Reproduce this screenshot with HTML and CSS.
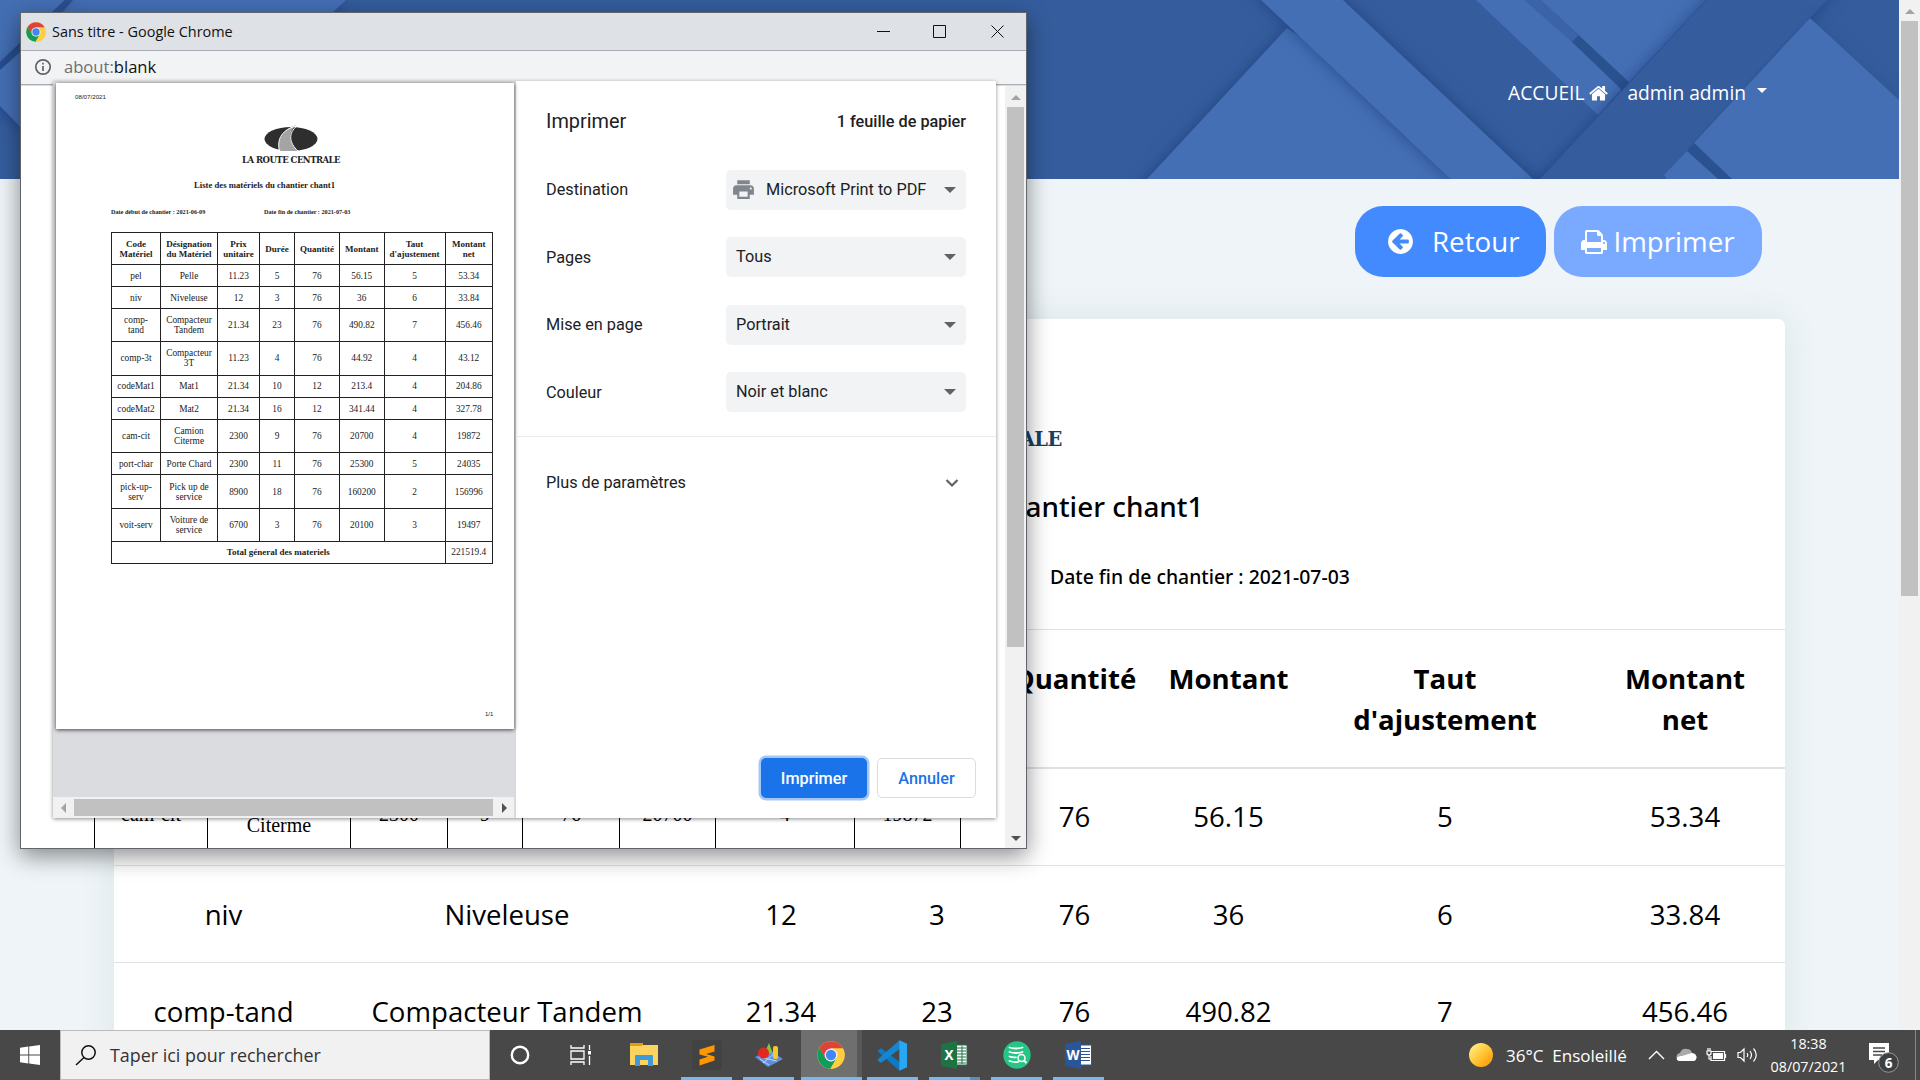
FILE: index.html
```html
<!DOCTYPE html>
<html lang="fr">
<head>
<meta charset="utf-8">
<title>Liste des matériels</title>
<link rel="stylesheet" href="styles.css">
</head>
<body>
<div class="desktop">
  <div class="browser">
    <div class="page">
      <header class="hero">
        <svg class="hero-art" width="1899" height="179" viewBox="0 0 1899 179">
          <rect width="1899" height="179" fill="#355d9d"/>
          <g fill="#446fb4">
            <path class="sh" d="M73 0H346L330 15H60z"/>
            <path class="sh" d="M-9 -9H74L0 62V110L-9 100z"/>
            <path class="sh" d="M0 70L28 45V135L0 106z"/>
            <path class="sh" d="M1287 28L1147 179L1100 240H1520V179z"/>
            <path class="sh" d="M1252 -9L1333 -9L1343 0L1533 179L1560 205H1478L1261 0z"/>
            <path d="M1476 0H1530L1622 88L1598 115z"/>
            <path fill="#3a64a7" d="M1524 0H1541L1585 42L1572 42z"/>
            <path fill="#2a5190" d="M1579 35L1629 82L1622 90L1572 42z"/>
            <path d="M1541 0H1706L1629 82z"/>
          </g>
          <path class="sh" fill="#355d9d" d="M1716 -10H1837L1810 18L1667 179L1650 200H1520L1540 179z"/>
          <g fill="#446fb4">
            <path class="sh soft" d="M1810 18L1899 100L1930 130V220H1770L1694 143z"/>
            <path fill="#355d9d" d="M1808 16L1664 173L1655 160L1790 10z"/>
            <path fill="#2a5190" d="M1694 143L1687 151L1718 179H1732z"/>
            <path d="M1687 151L1664 175L1667 179H1718z"/>
          </g>
        </svg>
        <nav class="nav">
          <span class="nav-home">ACCUEIL
            <svg width="19" height="19" viewBox="64 0 1664 1664"><path fill="#fff" d="M1472 992v480q0 26-19 45t-45 19h-384v-384h-256v384h-384q-26 0-45-19t-19-45v-480q0-1 .5-3t.5-3l575-474 575 474q1 2 1 6zm223-69l-62 74q-8 9-21 11h-3q-13 0-21-7l-692-577-692 577q-12 8-24 7-13-2-21-11l-62-74q-8-10-7-23.500t11-21.500l719-599q32-26 76-26t76 26l244 204v-195q0-14 9-23t23-9h192q14 0 23 9t9 23v408l219 182q10 8 11 21.500t-7 23.500z"/></svg>
          </span>
          <span class="nav-user">admin admin <i class="caret"></i></span>
        </nav>
      </header>
      <div class="actions">
        <div class="btn btn-back">
          <svg width="29" height="29" viewBox="0 0 1792 1792"><path fill="#fff" d="M1408 960v-128q0-26-19-45t-45-19h-502l189-189q19-19 19-45t-19-45l-91-91q-18-18-45-18t-45 18l-362 362-91 91q-18 18-18 45t18 45l91 91 362 362q18 18 45 18t45-18l91-91q18-18 18-45t-18-45l-189-189h502q26 0 45-19t19-45zm256-64q0 209-103 385.500t-279.500 279.500-385.500 103-385.500-103-279.500-279.500-103-385.500 103-385.500 279.500-279.500 385.500-103 385.500 103 279.500 279.500 103 385.500z"/></svg>
          <span>Retour</span>
        </div>
        <div class="btn btn-print">
          <svg width="28" height="28" viewBox="0 0 1792 1792"><path fill="#fff" d="M448 1536h896v-256h-896v256zm0-640h896v-384h-160q-40 0-68-28t-28-68v-160h-640v640zm1152 64q0-26-19-45t-45-19-45 19-19 45 19 45 45 19 45-19 19-45zm128 0v416q0 13-9.500 22.500t-22.500 9.500h-224v160q0 40-28 68t-68 28h-960q-40 0-68-28t-28-68v-160h-224q-13 0-22.500-9.500t-9.500-22.500v-416q0-79 56.500-135.500t135.500-56.500h64v-544q0-40 28-68t68-28h672q40 0 88 20t76 48l152 152q28 28 48 76t20 88v256h64q79 0 135.500 56.500t56.500 135.500z"/></svg>
          <span>Imprimer</span>
        </div>
      </div>
      <section class="card">
        <div class="brand">LA ROUTE CENTRALE</div>
        <h2 class="title">Liste des matériels du chantier chant1</h2>
        <div class="dates"><span>Date début de chantier : 2021-06-09</span><span>Date fin de chantier : 2021-07-03</span></div>
        <table class="materials">
          <colgroup><col style="width:219px"><col style="width:348px"><col style="width:200px"><col style="width:112px"><col style="width:163px"><col style="width:145px"><col style="width:288px"><col></colgroup>
          <thead><tr><th>Code Matériel</th><th>Désignation du Matériel</th><th>Prix unitaire</th><th>Durée</th><th>Quantité</th><th>Montant</th><th>Taut<br>d'ajustement</th><th>Montant<br>net</th></tr></thead>
          <tbody>
            <tr class="first"><td>pel</td><td>Pelle</td><td>11.23</td><td>5</td><td>76</td><td>56.15</td><td>5</td><td>53.34</td></tr>
            <tr><td>niv</td><td>Niveleuse</td><td>12</td><td>3</td><td>76</td><td>36</td><td>6</td><td>33.84</td></tr>
            <tr><td>comp-tand</td><td>Compacteur Tandem</td><td>21.34</td><td>23</td><td>76</td><td>490.82</td><td>7</td><td>456.46</td></tr>
          </tbody>
        </table>
      </section>
    </div>
    <div class="scroll scroll-main"><i class="up"></i><b></b></div>
  </div>

  <div class="window">
    <div class="titlebar">
      <svg width="20" height="20" viewBox="0 0 48 48"><use href="#chrome"/></svg>
      <span>Sans titre - Google Chrome</span>
      <svg class="controls" width="140" height="20" viewBox="0 0 140 20" fill="none" stroke="#111" stroke-width="1"><path d="M5 9.500H18M61.500 3.500h12v12h-12zM119.500 3.500l12 12M131.500 3.500l-12 12"/></svg>
    </div>
    <div class="address">
      <svg width="18" height="18" viewBox="0 0 18 18" fill="none" stroke="#5f6368" stroke-width="1.700"><circle cx="9" cy="9" r="7.200"/><path d="M9 8v5M9 4.800v1.700"/></svg>
      <span>about:<b>blank</b></span>
    </div>
    <div class="viewport">
      <div class="popup-doc">
        <table class="doc-table"><colgroup><col style="width:113px"><col style="width:143px"><col style="width:97px"><col style="width:75px"><col style="width:97px"><col style="width:96px"><col style="width:139px"><col style="width:106px"></colgroup>
          <tr><td>cam-cit</td><td>Camion<br>Citerme</td><td>2300</td><td>9</td><td>76</td><td>20700</td><td>4</td><td>19872</td></tr>
        </table>
      </div>
      <div class="scroll scroll-pop"><i class="up"></i><b></b><i class="down"></i></div>
    </div>

    <div class="dialog">
      <div class="preview">
        <div class="sheet">
          <div class="sheet-date">08/07/2021</div>
          <div class="sheet-logo">
            <svg width="54" height="27" viewBox="0 0 54 27"><ellipse cx="27" cy="14" rx="26.500" ry="12" fill="#2e2e2e"/><path d="M15 25C13 13 20 4 32 0C24 7 24 18 34 26H17z" fill="#a4a4a4"/><path d="M15.500 26C12 13 20 4 31 1.500M34 26C25 18 24 8 33 1" fill="none" stroke="#fff" stroke-width="1"/></svg>
            <span>LA ROUTE CENTRALE</span>
          </div>
          <div class="sheet-title">Liste des matériels du chantier chant1</div>
          <div class="sheet-dates"><span>Date début de chantier : 2021-06-09</span><span>Date fin de chantier : 2021-07-03</span></div>
          <table class="sheet-table">
            <colgroup><col style="width:49px"><col style="width:57px"><col style="width:42px"><col style="width:35px"><col style="width:45px"><col style="width:44.500px"><col style="width:61px"><col style="width:47.500px"></colgroup>
            <tr class="h32"><th>Code<br>Matériel</th><th>Désignation<br>du Matériel</th><th>Prix<br>unitaire</th><th>Durée</th><th>Quantité</th><th>Montant</th><th>Taut<br>d'ajustement</th><th>Montant<br>net</th></tr>
            <tr><td>pel</td><td>Pelle</td><td>11.23</td><td>5</td><td>76</td><td>56.15</td><td>5</td><td>53.34</td></tr>
            <tr><td>niv</td><td>Niveleuse</td><td>12</td><td>3</td><td>76</td><td>36</td><td>6</td><td>33.84</td></tr>
            <tr class="h33"><td>comp-<br>tand</td><td>Compacteur<br>Tandem</td><td>21.34</td><td>23</td><td>76</td><td>490.82</td><td>7</td><td>456.46</td></tr>
            <tr class="h33"><td>comp-3t</td><td>Compacteur<br>3T</td><td>11.23</td><td>4</td><td>76</td><td>44.92</td><td>4</td><td>43.12</td></tr>
            <tr class="h23"><td>codeMat1</td><td>Mat1</td><td>21.34</td><td>10</td><td>12</td><td>213.4</td><td>4</td><td>204.86</td></tr>
            <tr><td>codeMat2</td><td>Mat2</td><td>21.34</td><td>16</td><td>12</td><td>341.44</td><td>4</td><td>327.78</td></tr>
            <tr class="h33"><td>cam-cit</td><td>Camion<br>Citerme</td><td>2300</td><td>9</td><td>76</td><td>20700</td><td>4</td><td>19872</td></tr>
            <tr><td>port-char</td><td>Porte Chard</td><td>2300</td><td>11</td><td>76</td><td>25300</td><td>5</td><td>24035</td></tr>
            <tr class="h33"><td>pick-up-<br>serv</td><td>Pick up de<br>service</td><td>8900</td><td>18</td><td>76</td><td>160200</td><td>2</td><td>156996</td></tr>
            <tr class="h33"><td>voit-serv</td><td>Voiture de<br>service</td><td>6700</td><td>3</td><td>76</td><td>20100</td><td>3</td><td>19497</td></tr>
            <tr><th colspan="7">Total géneral des materiels</th><td>221519.4</td></tr>
          </table>
          <div class="sheet-page">1/1</div>
        </div>
        <div class="hscroll"><i class="left"></i><b></b><i class="right"></i></div>
      </div>
      <div class="settings">
        <div class="set-head"><span>Imprimer</span><strong>1 feuille de papier</strong></div>
        <div class="set-row"><label>Destination</label><div class="select"><svg class="printer" width="25" height="25" viewBox="0 0 24 24"><path fill="#80868b" d="M19 8H5c-1.660 0-3 1.340-3 3v6h4v4h12v-4h4v-6c0-1.660-1.340-3-3-3zm-3 11H8v-5h8v5zm3-7c-.55 0-1-.45-1-1s.45-1 1-1 1 .45 1 1-.45 1-1 1zm-1-9H6v4h12V3z"/></svg><span>Microsoft Print to PDF</span><i></i></div></div>
        <div class="set-row"><label>Pages</label><div class="select"><span>Tous</span><i></i></div></div>
        <div class="set-row"><label>Mise en page</label><div class="select"><span>Portrait</span><i></i></div></div>
        <div class="set-row"><label>Couleur</label><div class="select"><span>Noir et blanc</span><i></i></div></div>
        <div class="more"><span>Plus de paramètres</span><svg width="14" height="10" viewBox="0 0 14 10" fill="none" stroke="#5f6368" stroke-width="2.200"><path d="M1.500 2L7 7.500 12.500 2"/></svg></div>
        <div class="foot"><span class="ok">Imprimer</span><span class="cancel">Annuler</span></div>
      </div>
    </div>
  </div>

  <footer class="taskbar">
    <div class="start"><svg width="20" height="20" viewBox="0 0 20 20" fill="#fff"><path d="M0 2.800L8.300 1.600V9.600H0zM9.200 1.500L20 0V9.600H9.200zM0 10.500H8.300V18.500L0 17.300zM9.200 10.500H20V20L9.200 18.600z"/></svg></div>
    <div class="search"><svg width="22" height="22" viewBox="0 0 22 22" fill="none" stroke="#111" stroke-width="1.500"><circle cx="13.500" cy="8.500" r="6.700"/><path d="M9 13.500L1 21"/></svg><span>Taper ici pour rechercher</span></div>
    <div class="apps">
      <div class="app"><svg width="20" height="20" viewBox="0 0 20 20"><circle cx="10" cy="10" r="8.200" fill="none" stroke="#fff" stroke-width="2.400"/></svg></div>
      <div class="app"><svg width="22" height="20" viewBox="0 0 22 20" fill="none" stroke="#fff" stroke-width="1.300"><path d="M1 0V3H14V0M1 20V17H14V20M1 6H14V14H1zM19.500 0V5M19.500 11V20"/><path d="M18 6h3v3.500h-3z" fill="#fff" stroke="none"/></svg></div>
      <div class="app"><svg width="28" height="24" viewBox="0 0 28 24"><path d="M0 0h13v4H0z" fill="#e09c0a"/><path d="M0 3H11l2-1H28V22H0z" fill="#fbd35e"/><path d="M5 23V13q0-1 1-1H22q1 0 1 1V23H18V17H10V23z" fill="#3f9ad8"/></svg></div>
      <div class="app run"><svg width="30" height="30" viewBox="0 0 30 30"><rect width="30" height="30" rx="3" fill="#424242"/><path d="M7.500 9.500L22.500 5V11.500L14 14L22.500 16.500V20.500L7.500 25.500V19.500L16 16.800L7.500 14.500z" fill="#ff9800"/></svg></div>
      <div class="app run"><svg width="28" height="26" viewBox="0 0 28 26"><path d="M0 15L14 8L28 17L13 25z" fill="#5f8fe0"/><path d="M4 15L22 19M8 21L20 11M5 17L14 23" stroke="#bcd3fa" fill="none"/><path d="M10 10L14 1L18 12z" fill="#87c33d"/><rect x="18" y="4" width="5" height="13" rx="2" fill="#f2c82b"/><circle cx="8.500" cy="11" r="5.500" fill="#e3281f"/></svg></div>
      <div class="app run active"><svg width="28" height="28" viewBox="0 0 48 48"><g id="chrome"><circle cx="24" cy="24" r="23.500" fill="#ffcd40"/><path d="M3.700 12.200A23.500 23.500 0 0 1 44.400 12.200L44.500 13H24L14 30z" fill="#db4437"/><path d="M3.700 12.200A23.500 23.500 0 0 0 23 47.500L33.500 29.500L24 35L14.500 29.500z" fill="#0f9d58"/><path d="M24 13H44.400A23.500 23.500 0 0 1 23 47.500L33.500 29.500z" fill="#ffcd40"/><circle cx="24" cy="24" r="11" fill="#f1f1f1"/><circle cx="24" cy="24" r="8.800" fill="#4285f4"/></g></svg></div>
      <div class="app run"><svg width="31" height="31" viewBox="0 0 100 100"><path d="M3 34L10 28Q13 26 16 28L74 72V98L70 97L3 38Q1 36 3 34z" fill="#0a7bc4"/><path d="M3 66L10 72Q13 74 16 72L74 28V2L70 3L3 62Q1 64 3 66z" fill="#1786d0"/><path d="M72 1L97 12V88L72 99z" fill="#2aa7f4"/></svg></div>
      <div class="app run multi"><svg width="28" height="28" viewBox="0 0 28 28"><path d="M15 4H26V24H15z" fill="#fff" stroke="#1f7244"/><path d="M16 7h9M16 10h9M16 13h9M16 16h9M16 19h9M16 22h9M21 5V23" stroke="#1f7244" fill="none"/><path d="M0 3L16 0V28L0 25z" fill="#1f7244"/><text x="8" y="19" fill="#fff" class="ico">X</text></svg></div>
      <div class="app run"><svg width="28" height="28" viewBox="0 0 28 28"><circle cx="14" cy="14" r="13.700" fill="#25c685"/><path d="M6.500 6.500Q13 8.500 19.500 6.500M6.500 11Q13 13 19.500 11M6.500 15.500Q9 16.500 13 16.300M6.500 20Q10 21.300 15 21" stroke="#fff" stroke-width="1.800" stroke-linecap="round" fill="none"/><circle cx="18.500" cy="17" r="3.500" fill="#25c685" stroke="#fff" stroke-width="1.500"/><path d="M21 19.500L23.500 22" stroke="#fff" stroke-width="2"/></svg></div>
      <div class="app run"><svg width="28" height="28" viewBox="0 0 28 28"><path d="M15 4H26.500V24H15z" fill="#fff" stroke="#2a5699"/><path d="M16 7.500h9M16 10.500h9M16 13.500h9M16 16.500h9M16 19.500h9" stroke="#2a5699" fill="none"/><path d="M0 3L16 0V28L0 25z" fill="#2a5699"/><text x="8" y="19" fill="#fff" class="ico">W</text></svg></div>
    </div>
    <div class="tray">
      <i class="sun"></i>
      <span class="weather">36°C&nbsp; Ensoleillé</span>
      <svg class="chev" width="17" height="10" viewBox="0 0 17 10" fill="none" stroke="#fff" stroke-width="1.400"><path d="M1 9L8.500 1.500 16 9"/></svg>
      <svg class="cloud" width="21" height="14" viewBox="0 0 21 14"><path d="M4 12Q0 12 .5 8.500Q1 5 4 5Q6 0 11 1Q15 1 16 5Q20 5 20.500 9Q20 13 17 13z" fill="#aaa"/><path d="M3 13Q0 12 1 9.500Q3 7.500 6 8L16 5Q20.500 6 20.500 9.500Q20 13 17 13z" fill="#fff"/></svg>
      <svg class="bat" width="21" height="14" viewBox="0 0 21 14" fill="none" stroke="#fff" stroke-width="1.200"><path d="M5 3.500H18.500V12.500H5V8M19.500 6V10M1 3H5V6Q3 8 1 6zM2 0V3M4 0V3M3 7V11H5"/><path d="M7 5h10v6H7z" fill="#fff" stroke="none"/></svg>
      <svg class="vol" width="21" height="16" viewBox="0 0 21 16" fill="none" stroke="#fff" stroke-width="1.200"><path d="M1 5.500H3.500L7 2V14L3.500 10.500H1zM10 6Q11.500 8 10 10M13 4Q16 8 13 12M16.500 1.500Q22 8 16.500 14.500"/></svg>
      <div class="clock"><span>18:38</span><span>08/07/2021</span></div>
      <div class="notif"><svg width="32" height="32" viewBox="0 0 32 32"><path d="M1 1H21V18H10L6 22V18H1z" fill="#fff"/><path d="M5 6H17M5 9.500H17M5 13H14" stroke="#484848" stroke-width="1.300"/><circle cx="20.500" cy="20.500" r="9.800" fill="#3d3f40" stroke="#999"/><text x="20.500" y="25.500" fill="#fff" class="ico">6</text></svg></div>
    </div>
  </footer>
</div>
</body>
</html>
```
FILE: styles.css
```css
* { box-sizing: border-box; }
body { margin: 0; overflow: hidden; }
.desktop { position: relative; width: 1920px; height: 1080px; overflow: hidden; font-family: "Open Sans", sans-serif; background: #eef4f7; display: flex; flex-direction: column; }
.browser { height: 1030px; display: flex; overflow: hidden; }
.page { width: 1899px; background: #eef4f7; color: #000; }

.hero { position: relative; height: 179px; overflow: hidden; display: flex; justify-content: flex-end; }
.hero-art { position: absolute; left: 0; top: 0; }
.sh { filter: drop-shadow(0 0 8px rgba(20, 50, 115, .6)); }
.soft { filter: drop-shadow(0 0 8px rgba(20, 50, 115, .2)); }
.nav { position: relative; display: flex; gap: 19px; height: 184px; align-items: center; color: #fff; font-size: 19.200px; padding-right: 132px; white-space: nowrap; }
.nav-home, .nav-user { display: flex; align-items: center; gap: 5px; }
.caret { margin-left: 6px; margin-bottom: 3px; border: 5.500px solid transparent; border-top: 5.500px solid #fff; border-bottom: 0; }

.actions { display: flex; justify-content: flex-end; gap: 8px; padding: 27px 137px 0 0; }
.btn { height: 71px; border-radius: 28px; display: flex; align-items: center; color: #fff; font-size: 27.700px; background: #448aff; }
.btn span { padding-bottom: 2px; }
.btn-back { width: 191px; padding-left: 31px; gap: 17px; }
.btn-print { width: 208px; padding-left: 26px; gap: 5.500px; background: #7aaaff; }

.card { margin: 42px 0 0 114px; width: 1671px; height: 900px; background: #fff; border-radius: 7px; box-shadow: 0 0 34px rgba(69, 110, 130, .1); }
.brand { height: 196px; padding: 109px 10px 0 0; text-align: center; color: #17415f; font: bold 19.500px "DejaVu Serif", serif; letter-spacing: -.6px; white-space: nowrap; }
.title { margin: -30px 0 0; height: 42px; text-align: center; font: 500 27.900px/42px "Noto Sans", "Open Sans", sans-serif; }
.dates { margin-top: 33px; height: 69px; display: flex; font: 500 19.400px/34px "Noto Sans", "Open Sans", sans-serif; padding-left: 315px; gap: 0; }
.dates span { width: 621px; }
.dates span + span { width: auto; }
.materials { width: 1671px; table-layout: fixed; border-collapse: collapse; font-size: 27.600px; line-height: 41px; text-align: center; }
.materials th, .materials td { padding: 28px 10px 26px; border-top: 1px solid #dee2e6; vertical-align: top; height: 97px; }
.materials thead th { border-bottom: 2px solid #dee2e6; height: 138px; padding-bottom: 25px; white-space: nowrap; }
.materials .first td { height: 98px; padding-top: 27px; }
.materials tr > :last-child { padding-right: 14px; }

.scroll { width: 21px; background: #f1f1f1; display: flex; flex-direction: column; align-items: center; }
.scroll b { width: 17px; background: #c1c1c1; }
.up { margin: 9px 0 7px; border: 5px solid transparent; border-bottom: 5px solid #a3a3a3; border-top: 0; }
.scroll-main b { height: 575px; }

.window { position: absolute; left: 20px; top: 12px; width: 1007px; height: 837px; border: 1px solid #62666c; background: #fff; box-shadow: 0 7px 22px rgba(0, 0, 0, .45); display: flex; flex-direction: column; }
.titlebar { height: 38px; background: #dee1e6; border-bottom: 1px solid #a9acb0; display: flex; align-items: center; padding: 0 14px 0 5px; gap: 6px; font-size: 14.450px; color: #111; }
.controls { margin-left: auto; }
.address { height: 34px; background: #f1f3f4; border-bottom: 1px solid #a9acb0; display: flex; align-items: center; gap: 12px; padding: 0 0 2px 13px; font-size: 16.600px; color: #6b6f73; }
.address b { font-weight: 400; color: #111; }
.viewport { flex: 1; display: flex; justify-content: space-between; align-items: stretch; border-top: 1px solid #ddd; }
.scroll-pop b { height: 540px; }
.scroll-pop .down { margin-top: auto; }
.down { margin-bottom: 7px; border: 5px solid transparent; border-top: 5px solid #505050; border-bottom: 0; }
.popup-doc { width: 984px; display: flex; align-items: flex-end; padding-left: 73px; overflow: hidden; }
.doc-table { border-collapse: collapse; table-layout: fixed; width: 866px; height: 72px; font: 20px/23px "Liberation Serif", serif; text-align: center; }
.doc-table td { border: 1px solid #000; border-width: 0 1px; padding: 4px 0 0; }

.dialog { position: absolute; left: 32px; top: 68px; width: 943px; height: 737px; background: #fff; display: flex; box-shadow: 0 1px 4px rgba(0, 0, 0, .45); overflow: hidden; }
.preview { width: 463px; background: #dadce0; border-right: 1px solid #d5d7da; padding: 2px 1px 0 0; display: flex; flex-direction: column; }
.sheet { margin-left: 3px; width: 458px; height: 646px; background: #fff; box-shadow: 0 1px 4px #444; display: flex; flex-direction: column; color: #222; font-family: "Liberation Serif", serif; white-space: nowrap; }
.sheet-date { font: 6.200px/8px "Liberation Sans", sans-serif; padding: 10px 0 0 19px; height: 42px; }
.sheet-logo { height: 46px; width: 98px; margin-left: 186px; display: flex; flex-direction: column; align-items: center; }
.sheet-logo span { font: bold 8.500px/12px "DejaVu Serif", serif; letter-spacing: -.5px; padding-top: 2px; }
.sheet-title { font-weight: bold; font-size: 8.700px; line-height: 14px; margin: 7px 0 0 138px; }
.sheet-dates { display: flex; font-weight: bold; font-size: 6.200px; line-height: 10px; padding: 15px 0 0 55px; height: 40px; }
.sheet-dates span { width: 153px; }
.sheet-table { margin-left: 55px; width: 382px; table-layout: fixed; border-collapse: collapse; font-size: 9.350px; line-height: 10px; text-align: center; }
.sheet-table th, .sheet-table td { border: 1px solid #222; padding: 0; height: 22px; }
.sheet-table th { font-size: 9px; }
.sheet-table .h32 th { height: 32px; }
.sheet-table .h33 td { height: 33.250px; }
.sheet-table .h23 td { height: 22.700px; }
.sheet-page { margin-top: auto; font: 6px/8px "Liberation Sans", sans-serif; padding: 0 0 11px 429px; }
.hscroll { margin-top: auto; height: 21px; background: #f1f1f1; display: flex; align-items: center; }
.hscroll b { width: 419px; height: 17px; background: #c1c1c1; }
.left { margin: 0 8px 0 8px; border: 5px solid transparent; border-right: 5px solid #a3a3a3; border-left: 0; }
.right { margin-left: 9px; border: 5px solid transparent; border-left: 5px solid #505050; border-right: 0; }

.settings { flex: 1; font: 16.250px Roboto, sans-serif; color: #202124; display: flex; flex-direction: column; }
.set-head { display: flex; justify-content: space-between; align-items: center; height: 75px; padding: 5px 30px 0; font-size: 19.900px; }
.set-head strong { font-size: 16.250px; font-weight: 500; }
.set-row { display: flex; justify-content: space-between; align-items: center; height: 67.500px; padding: 0 30px; }
.select { width: 240px; height: 40px; border-radius: 5px; background: #f1f3f4; display: flex; align-items: center; padding: 0 10px; }
.select span { padding-bottom: 1px; }
.printer { margin: 0 10px 0 -5px; }
.select i { margin-left: auto; border: 6px solid transparent; border-top: 6px solid #5f6368; border-bottom: 0; }
.more { margin-top: 10px; border-top: 1px solid #e8eaed; height: 92px; display: flex; align-items: center; justify-content: space-between; padding: 0 37px 0 30px; }
.foot { margin-top: auto; display: flex; justify-content: flex-end; gap: 10px; padding: 0 20px 20px 0; font-weight: 500; }
.foot span { height: 40px; line-height: 41px; text-align: center; border-radius: 5px; }
.ok { width: 106px; background: #1a73e8; color: #fff; box-shadow: 0 0 0 2.500px #a3c7f6; }
.foot .cancel { width: 99px; line-height: 39px; border: 1px solid #dadce0; color: #1a73e8; }

.taskbar { position: relative; height: 50px; background: #484848; display: flex; color: #fff; }
.start { width: 60px; display: flex; align-items: center; justify-content: center; }
.search { width: 430px; background: #f1f1f1; border: 1px solid #bbb; display: flex; align-items: center; gap: 13px; padding-left: 14px; font-size: 17.900px; color: #333; }
.apps { display: flex; padding-left: 1px; }
.app { width: 56px; margin-right: 6px; display: flex; align-items: center; justify-content: center; position: relative; }
.app:nth-child(1) { width: 58px; }
.app:nth-child(2) { width: 52px; margin-right: 5px; }
.app:nth-child(3) { width: 56px; margin: 0 8px 0 1px; padding-left: 5px; }
.run { padding-left: 3px; }
.run::after { content: ""; position: absolute; left: 4px; bottom: 0; width: 51px; height: 3px; background: #76b9ed; }
.active { background: #6f6f6f; box-shadow: 5px 0 0 #585858; }
.active::after { left: 0; width: 61px; }
.multi::after { background: linear-gradient(90deg, #76b9ed 41px, #5b8fb9 41px); }
.ico { font: bold 13.500px "Open Sans", sans-serif; text-anchor: middle; }
.tray { margin-left: auto; display: flex; align-items: center; padding-right: 7px; border-right: 1px solid #888; margin-right: 4px; font-size: 17px; white-space: nowrap; }
.sun { width: 24px; height: 24px; border-radius: 50%; background: linear-gradient(135deg, #ffe878 15%, #ffc12e 55%, #ff9100); }
.weather { width: 121px; margin: 0 21px 0 13px; }
.cloud { margin-left: 11px; }
.bat { margin-left: 9px; }
.vol { margin-left: 10px; }
.clock { width: 77px; margin-left: 12px; display: flex; flex-direction: column; text-align: center; font-size: 14.300px; line-height: 23px; align-items: center; }
.notif { margin-left: 21px; width: 40px; display: flex; padding-top: 6px; }
```
